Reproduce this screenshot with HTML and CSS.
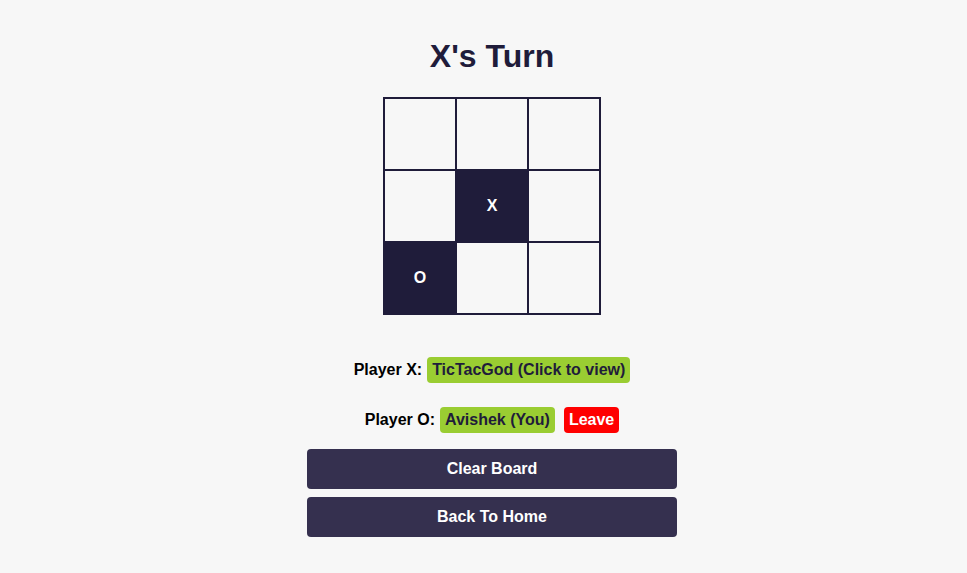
FILE: index.html
```html
<!DOCTYPE html>
<html>
<head>
<meta charset="utf-8">
<link rel="stylesheet" href="styles.css">
</head>
<body>
<main class="game">
  <h1 class="title">X's Turn</h1>
  <div class="board">
    <div class="cell"></div>
    <div class="cell"></div>
    <div class="cell"></div>
    <div class="cell"></div>
    <div class="cell filled">X</div>
    <div class="cell"></div>
    <div class="cell filled">O</div>
    <div class="cell"></div>
    <div class="cell"></div>
  </div>
  <div class="player-row first">
    <span class="label">Player X:</span>
    <span class="badge green">TicTacGod (Click to view)</span>
  </div>
  <div class="player-row second">
    <span class="label">Player O:</span>
    <span class="badge green">Avishek (You)</span>
    <span class="badge red leave">Leave</span>
  </div>
  <div class="actions">
    <button class="btn">Clear Board</button>
    <button class="btn">Back To Home</button>
  </div>
</main>
</body>
</html>
```
FILE: styles.css
```css
html, body {
  margin: 0;
  padding: 0;
  background: #f7f7f7;
}
body {
  font-family: "Liberation Sans", Arial, sans-serif;
  color: #000;
}
.game {
  display: flex;
  flex-direction: column;
  align-items: center;
  padding-top: 38px;
  padding-left: 17px;
}
.title {
  margin: 0;
  font-size: 32px;
  line-height: 37px;
  font-weight: 700;
  color: #1f1c3a;
}
.board {
  margin-top: 22px;
  display: grid;
  grid-template-columns: repeat(3, 72px);
  grid-template-rows: repeat(3, 72px);
  border: 1px solid #1f1c3a;
}
.cell {
  border: 1px solid #1f1c3a;
  display: flex;
  align-items: center;
  justify-content: center;
  font-size: 16px;
  font-weight: 700;
  color: #fff;
}
.cell.filled {
  background: #1f1c3a;
}
.player-row {
  display: flex;
  align-items: center;
  gap: 6px;
  font-size: 16px;
  font-weight: 700;
  line-height: 18px;
}
.player-row.first {
  margin-top: 42px;
  gap: 5px;
}
.player-row.second {
  margin-top: 24px;
  gap: 5px;
}
.badge {
  padding: 4px 5px;
  border-radius: 4px;
}
.green {
  background: #9acd32;
  color: #1f1c3a;
}
.red {
  background: #ff0000;
  color: #fff;
}
.leave {
  margin-left: 4px;
}
.actions {
  margin-top: 16px;
  display: flex;
  flex-direction: column;
  gap: 8px;
}
.btn {
  width: 370px;
  height: 40px;
  border: none;
  border-radius: 4px;
  background: #35304f;
  color: #fff;
  font-family: "Liberation Sans", Arial, sans-serif;
  font-size: 16px;
  font-weight: 700;
  padding: 0;
}
```
